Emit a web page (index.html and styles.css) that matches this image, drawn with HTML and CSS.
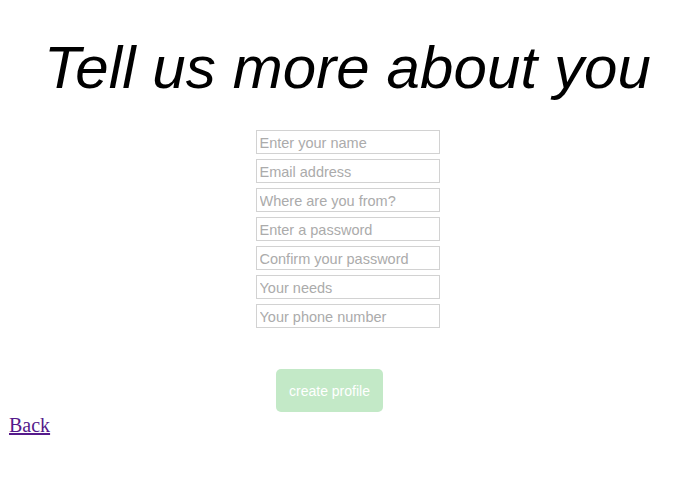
FILE: index.html
```html
<!DOCTYPE html>
<html lang="en">
<head>
    <meta charset="UTF-8">
    <meta name="viewport" content="width=device-width, initial-scale=1.0">
    <title>Create Profile</title>
    <link rel="stylesheet" href="styles.css">
</head>
<body>
    <h1 class="title">Tell us more about you</h1>

    <form class="profile-form" onsubmit="return false;">
        <div class="fields">
            <input type="text" placeholder="Enter your name">
            <input type="email" placeholder="Email address">
            <input type="text" placeholder="Where are you from?">
            <input type="password" placeholder="Enter a password">
            <input type="password" placeholder="Confirm your password">
            <input type="text" placeholder="Your needs">
            <input type="tel" placeholder="Your phone number">
        </div>
        <div class="actions">
            <button type="submit" class="create-button" disabled>create profile</button>
        </div>
    </form>

    <a class="back-link" href="#">Back</a>
</body>
</html>
```

FILE: styles.css
```css
body {
    margin: 8px;
    font-family: "Liberation Serif", serif;
}

.title {
    font-family: "Liberation Sans", Arial, sans-serif;
    font-style: italic;
    font-weight: normal;
    font-size: 60px;
    letter-spacing: 0.1px;
    text-align: center;
    margin: 30px 0 32px;
    line-height: 1;
}

.fields {
    display: flex;
    flex-direction: column;
    align-items: center;
    gap: 5px;
}

.fields input {
    width: 184px;
    height: 24px;
    box-sizing: border-box;
    padding: 1px 3px 0;
    border: 1px solid #d2d2d2;
    font-family: "Liberation Sans", Arial, sans-serif;
    font-size: 14.5px;
    margin: 0;
}

.fields input::placeholder {
    color: #ababab;
}

.actions {
    display: flex;
    justify-content: center;
    margin-top: 41px;
}

.create-button {
    width: 107px;
    height: 43px;
    margin-right: 36px;
    padding: 0;
    background-color: #c3e9c7;
    color: white;
    border: none;
    border-radius: 5px;
    font-family: "Liberation Sans", Arial, sans-serif;
    font-size: 14px;
}

.back-link {
    display: inline-block;
    font-size: 20px;
    color: #551a8b;
    margin: 2px 0 0 1px;
}
```
